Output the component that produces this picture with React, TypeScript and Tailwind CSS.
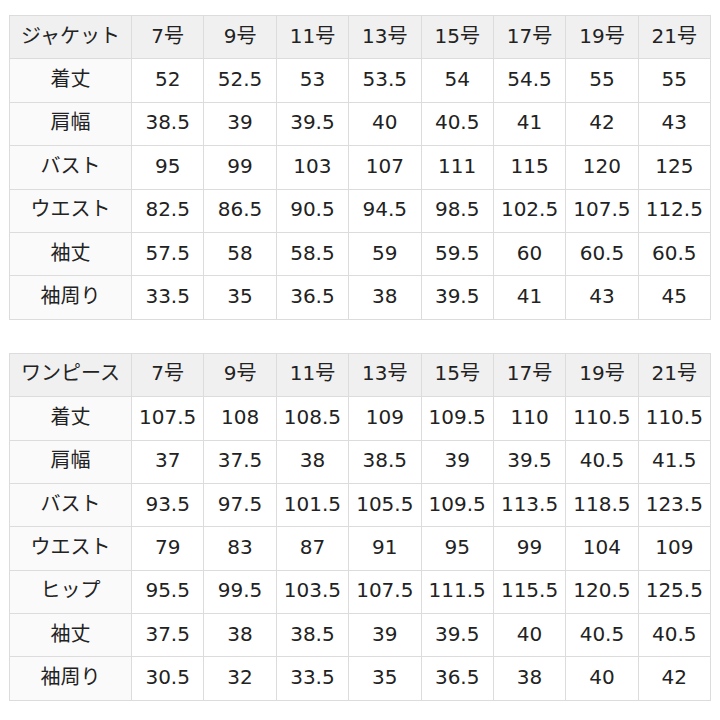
import React from "react";

const sizes = ["7号", "9号", "11号", "13号", "15号", "17号", "19号", "21号"];

type Row = [string, ...string[]];

const jacket: Row[] = [
  ["着丈", "52", "52.5", "53", "53.5", "54", "54.5", "55", "55"],
  ["肩幅", "38.5", "39", "39.5", "40", "40.5", "41", "42", "43"],
  ["バスト", "95", "99", "103", "107", "111", "115", "120", "125"],
  ["ウエスト", "82.5", "86.5", "90.5", "94.5", "98.5", "102.5", "107.5", "112.5"],
  ["袖丈", "57.5", "58", "58.5", "59", "59.5", "60", "60.5", "60.5"],
  ["袖周り", "33.5", "35", "36.5", "38", "39.5", "41", "43", "45"],
];

const onepiece: Row[] = [
  ["着丈", "107.5", "108", "108.5", "109", "109.5", "110", "110.5", "110.5"],
  ["肩幅", "37", "37.5", "38", "38.5", "39", "39.5", "40.5", "41.5"],
  ["バスト", "93.5", "97.5", "101.5", "105.5", "109.5", "113.5", "118.5", "123.5"],
  ["ウエスト", "79", "83", "87", "91", "95", "99", "104", "109"],
  ["ヒップ", "95.5", "99.5", "103.5", "107.5", "111.5", "115.5", "120.5", "125.5"],
  ["袖丈", "37.5", "38", "38.5", "39", "39.5", "40", "40.5", "40.5"],
  ["袖周り", "30.5", "32", "33.5", "35", "36.5", "38", "40", "42"],
];

function SizeTable({ title, rows }: { title: string; rows: Row[] }) {
  return (
    <table className="w-[702px] table-fixed border-collapse text-[20px] text-[#222]">
      <colgroup>
        <col className="w-[122px]" />
        {sizes.map((s) => (
          <col key={s} />
        ))}
      </colgroup>
      <thead>
        <tr className="h-[43.4px] bg-[#f0f0f0]">
          <th className="border border-[#dcdcdc] p-0 pb-[3px] text-center font-normal">{title}</th>
          {sizes.map((s) => (
            <th key={s} className="border border-[#dcdcdc] p-0 pb-[3px] text-center font-normal">
              {s}
            </th>
          ))}
        </tr>
      </thead>
      <tbody>
        {rows.map(([label, ...vals]) => (
          <tr key={label} className="h-[43.4px]">
            <td className="border border-[#dcdcdc] bg-[#fafafa] p-0 pb-[3px] text-center">{label}</td>
            {vals.map((v, i) => (
              <td key={i} className="border border-[#dcdcdc] bg-white p-0 pb-[3px] text-center">
                {v}
              </td>
            ))}
          </tr>
        ))}
      </tbody>
    </table>
  );
}

export default function App() {
  return (
    <div
      className="flex w-[720px] flex-col gap-[33px] bg-white pl-[9px] pt-[15px]"
      style={{ fontFamily: '"DejaVu Sans", "Noto Sans CJK JP", sans-serif' }}
    >
      <SizeTable title="ジャケット" rows={jacket} />
      <SizeTable title="ワンピース" rows={onepiece} />
    </div>
  );
}
